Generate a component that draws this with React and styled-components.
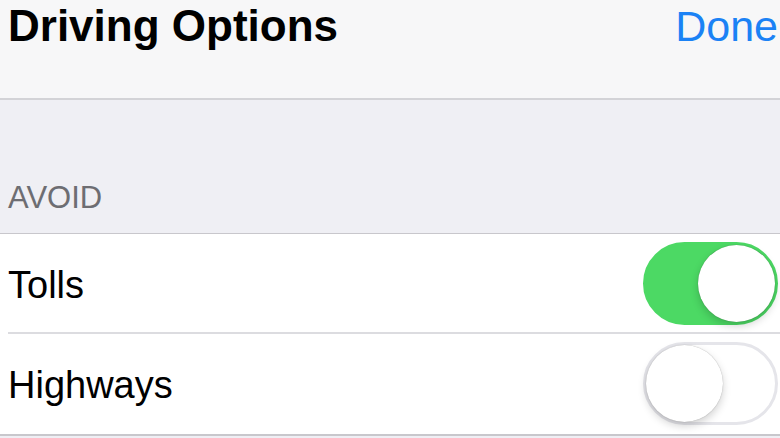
import React, { useState } from "react";
import styled, { createGlobalStyle } from "styled-components";

const GlobalStyle = createGlobalStyle`
    html, body {
        margin: 0;
        padding: 0;
        background: #efeff4;
        font-family: "Liberation Sans", Arial, sans-serif;
        -webkit-font-smoothing: antialiased;
    }
`;

const options = [
    { id: "tolls", label: "Tolls", on: true },
    { id: "highways", label: "Highways", on: false },
];

const Toggle = ({ on, onClick }) => (
    <Track on={on ? 1 : 0} onClick={onClick}>
        <Knob on={on ? 1 : 0} />
    </Track>
);

const App = () => {
    const [items, setItems] = useState(options);
    const flip = (id) => setItems((list) => list.map((i) => (i.id === id ? { ...i, on: !i.on } : i)));

    return (
        <>
            <GlobalStyle />
            <Page>
                <NavBar>
                    <Title>Driving Options</Title>
                    <DoneButton>Done</DoneButton>
                </NavBar>
                <SectionHeader>AVOID</SectionHeader>
                <Group>
                    {items.map((item, idx) => (
                        <Row key={item.id} last={idx === items.length - 1 ? 1 : 0}>
                            <Label>{item.label}</Label>
                            <Toggle on={item.on} onClick={() => flip(item.id)} />
                        </Row>
                    ))}
                </Group>
            </Page>
        </>
    );
};

export default App;

/** styled components **/
const Page = styled.div`
    width: 780px;
    height: 438px;
    overflow: hidden;
    background: #efeff4;
`;

const NavBar = styled.div`
    height: 100px;
    display: flex;
    align-items: flex-start;
    justify-content: space-between;
    background: #f7f7f8;
    border-bottom: 2px solid #d3d3d7;
    box-sizing: border-box;
    padding: 2px 2px 0 8px;
`;

const Title = styled.div`
    font-size: 44px;
    font-weight: 700;
    color: #000;
    line-height: 48px;
`;

const DoneButton = styled.div`
    font-size: 43px;
    color: #1b82f5;
    line-height: 48px;
    cursor: pointer;
`;

const SectionHeader = styled.div`
    height: 133px;
    display: flex;
    align-items: flex-end;
    box-sizing: border-box;
    padding: 0 0 18px 8px;
    font-size: 31px;
    color: #6d6d72;
    line-height: 34px;
`;

const Group = styled.div`
    background: #fff;
    border-top: 1px solid #c8c7cc;
    border-bottom: 2px solid #c8c7cc;
`;

const Row = styled.div`
    height: 100px;
    display: flex;
    align-items: center;
    justify-content: space-between;
    padding: 0 2px 2px 8px;
    box-sizing: border-box;
    position: relative;
    &::after {
        content: "";
        display: ${(p) => (p.last ? "none" : "block")};
        position: absolute;
        left: 8px;
        right: 0;
        bottom: 0;
        height: 2px;
        background: #dcdce0;
    }
`;

const Label = styled.span`
    font-size: 38px;
    color: #000;
    margin-top: 4px;
`;

const Track = styled.div`
    width: 135px;
    height: 83px;
    border-radius: 42px;
    box-sizing: border-box;
    background: ${(p) => (p.on ? "#4cd964" : "#fff")};
    border: 3px solid ${(p) => (p.on ? "#4cd964" : "#e5e5ea")};
    display: flex;
    align-items: center;
    justify-content: ${(p) => (p.on ? "flex-end" : "flex-start")};
    cursor: pointer;
`;

const Knob = styled.div`
    width: 77px;
    height: 77px;
    border-radius: 50%;
    background: #fff;
    box-shadow: 0 4px 8px rgba(0, 0, 0, 0.18), 0 0 1px rgba(0, 0, 0, 0.35);
`;
